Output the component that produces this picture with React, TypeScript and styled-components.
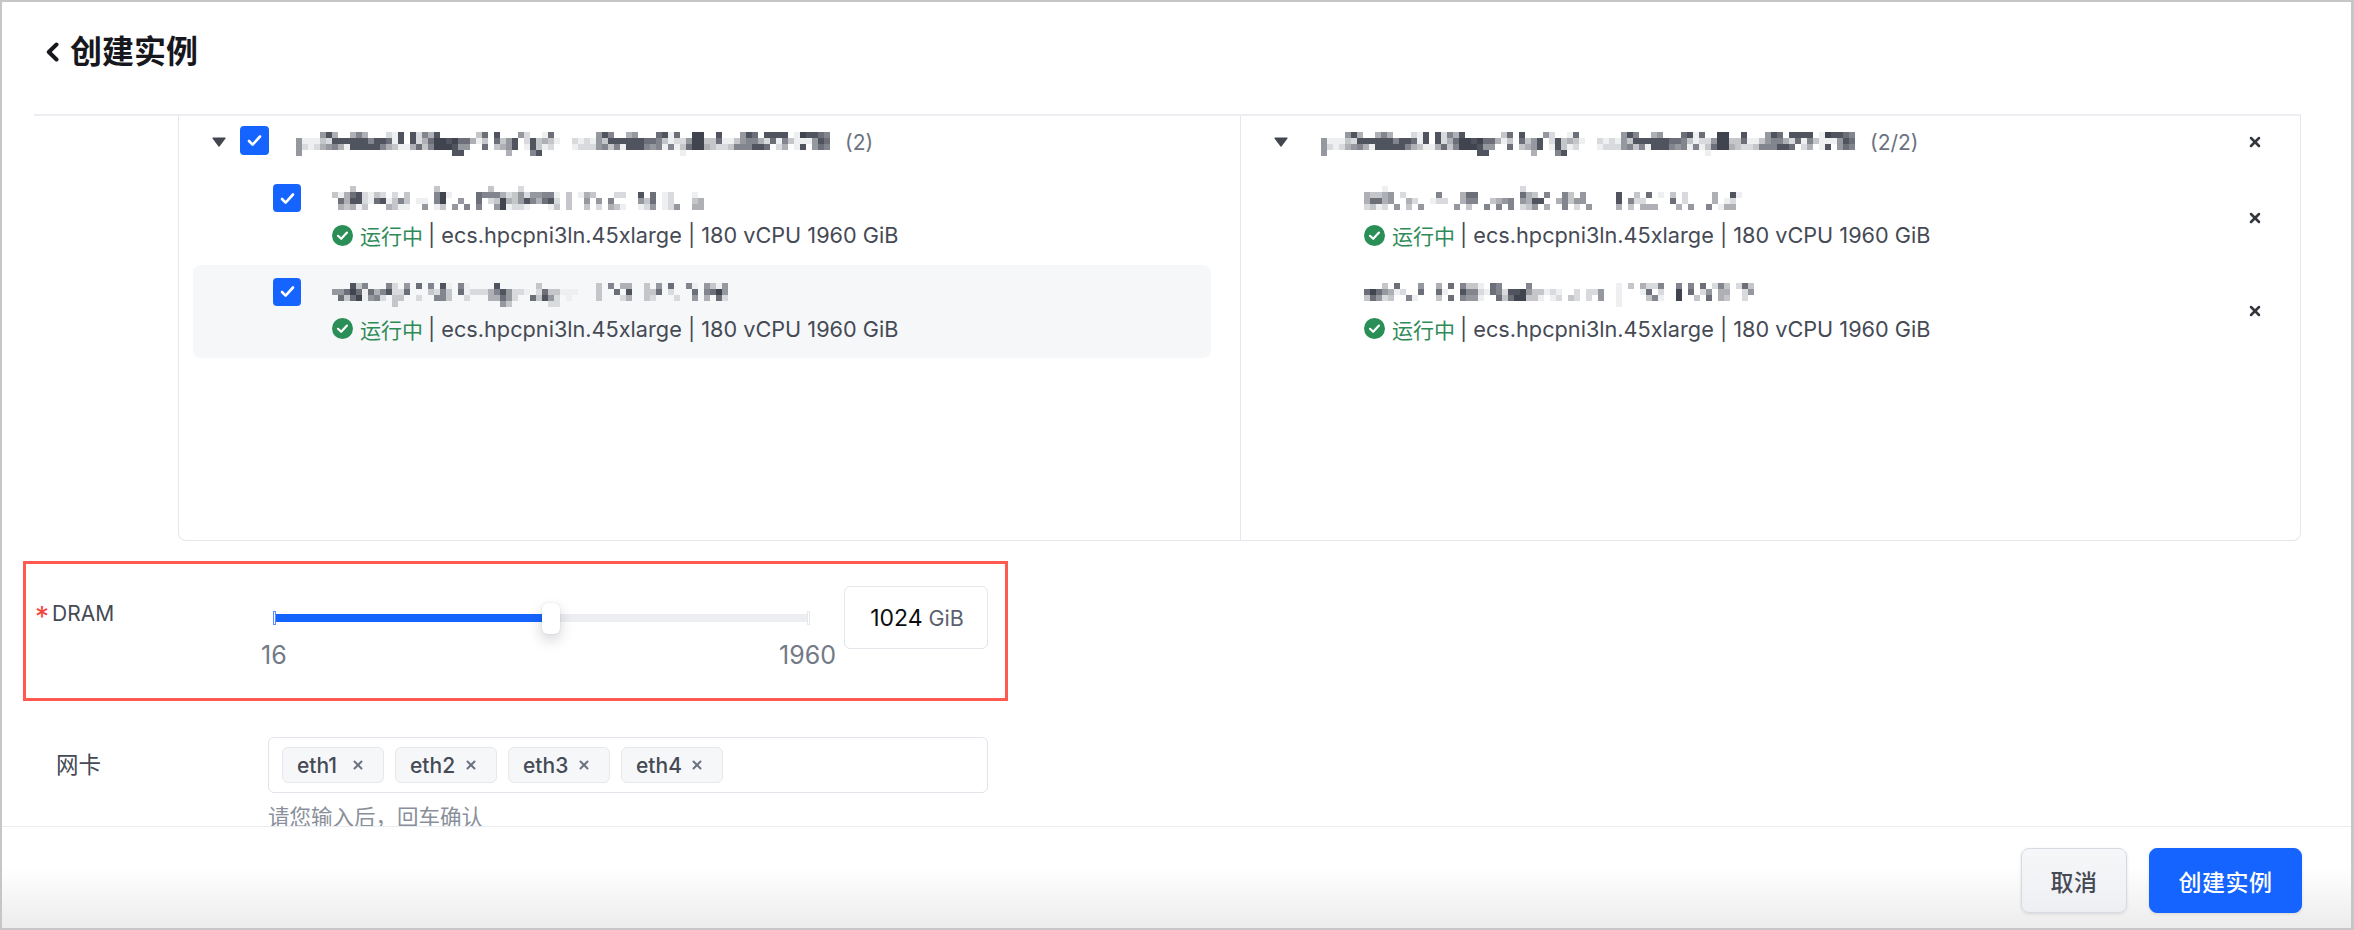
import React from "react";
import styled, { createGlobalStyle } from "styled-components";
import { X } from "lucide-react";

const LEVELS = ["", "#eeeff1", "#d8dadd", "#c4c6ca", "#aeb0b6", "#96989f", "#82858d", "#6c6f78", "#50545f", "#3f444f"];

// pixelated (redacted) names, one digit per 6px cell
const GROUP_NAME = [
  "0000584004 6400021808 2648000000 3708000520 017000 0000586004 5000781700 9900800058 7088880198 876",
  "5111328888 8868871808 2479989774 1307358028 343100 2121538888 8877631225 9933711356 6427163111 587",
  "5212456418 8888643114 7369998550 0703458018 312000 1222563618 8865616137 9943223666 8870240180 576",
  "5000000000 0000000000 0000008800 0000040006 800000 0000000000 0000000010",
];
const NODE_A = [
  "0003000000 0000000300 0000003000 0200000000",
  "3147821320 2030000691 0000766642 3525566103 0143000220 0807012000 10",
  "0748821781 3630110690 0500702394 3586478203 0050506000 0537012000 34",
  "0434130004 3110050130 5060600591 2210001303 0030204310 0125012500 44",
];
const NODE_B = [
  "0008360006 2050706081 0610000800 0000300000 0000306044 0030507006 105315",
  "5579717468 2270003263 0712224685 2210273311 1000300708 0033702000 706795",
  "0737915620 3300200663 0020004475 2007385201 0000300024 0032000200 504072",
  "0000000000 3000000000 0000000053 0000002200",
];
const NODE_C = [
  "0001000000 0000000000 0000002000",
  "4334502000 0060004770 0000007430 6006305000 0080030701 0302000040 081",
  "4774500420 0122004660 0345605488 0046355000 0080622000 0702000040 12",
  "2312050305 0000050300 6060602350 4006020500 0040304440 0040500601 44",
];
const NODE_D = [
  "0003070005 0040706331 0760000600 0000000000 0010304226 0060607026 30273",
  "7975412007 0071008662 1762889533 1210020225 0010001702 0090702504 40025",
  "3752300610 0030706551 0073799331 0120320205 0010000361 0090030704 3002",
  "0000000000 0000000000 0000000000 0000000000 001",
];

const GlobalStyle = createGlobalStyle`
  html, body {
    margin: 0;
    padding: 0;
    background: #fff;
  }
  body {
    font-family: Inter, "Noto Sans CJK SC", sans-serif;
    font-size: 21px;
    color: #454a55;
  }
`;

const Frame = styled.div`
  position: relative;
  box-sizing: border-box;
  width: 2354px;
  height: 930px;
  display: flex;
  flex-direction: column;
  overflow: hidden;
  background: #fff;
  border: solid #c6c6c6;
  border-width: 2px 3px 2px 2px;
`;

const Header = styled.header`
  flex: none;
  box-sizing: border-box;
  height: 112px;
  padding: 0 0 12px 44px;
  display: flex;
  align-items: center;
  gap: 11px;
`;

const Title = styled.h1`
  margin: 0;
  font-size: 32px;
  line-height: 40px;
  font-weight: 600;
  color: #16181d;
`;

const Body = styled.main`
  flex: 1;
  min-height: 0;
  overflow: hidden;
  margin: 0 50px 0 32px;
  border-top: 2px solid #eceef1;
`;

const Transfer = styled.section`
  box-sizing: border-box;
  margin-left: 144px;
  height: 425px;
  display: grid;
  grid-template-columns: 1062px 1fr;
  border: 1px solid #e4e6eb;
  border-top: none;
  border-radius: 0 0 8px 8px;
`;

const Panel = styled.div<{ $right?: boolean }>`
  padding-top: 10px;
  border-left: ${(p) => (p.$right ? "1px solid #e4e6eb" : "none")};
  margin-left: ${(p) => (p.$right ? "-1px" : "0")};
`;

const GroupRow = styled.div`
  height: 32px;
  padding-left: 33px;
  display: flex;
  align-items: center;
`;

const CaretIcon = styled.svg`
  flex: none;
  width: 14px;
  height: 10px;
`;

const GroupName = styled.div<{ $left: number }>`
  margin: 4px 0 0 ${(p) => p.$left}px;
`;

const Count = styled.span`
  margin-left: 15px;
  color: #6b7280;
`;

const ItemList = styled.div`
  margin-top: 13px;
`;

const Item = styled.div<{ $active?: boolean }>`
  box-sizing: border-box;
  width: 1018px;
  height: 93.5px;
  margin-left: 14px;
  padding-left: 80px;
  display: flex;
  gap: 31px;
  border-radius: 8px;
  background: ${(p) => (p.$active ? "#f6f7f9" : "transparent")};
`;

const SelectedItem = styled.div`
  height: 93.5px;
  padding: 0 37px 0 123px;
  display: flex;
  align-items: flex-start;
`;

const CheckBox = styled.span<{ $size: number; $top?: number; $left?: number }>`
  flex: none;
  align-self: flex-start;
  width: ${(p) => p.$size}px;
  height: ${(p) => p.$size}px;
  margin-top: ${(p) => p.$top ?? 0}px;
  margin-left: ${(p) => p.$left ?? 0}px;
  display: flex;
  align-items: center;
  justify-content: center;
  border-radius: 4px;
  background: #1664ff;
`;

const NodeText = styled.div`
  display: flex;
  flex-direction: column;
`;

const NameSlot = styled.div<{ $top: number }>`
  box-sizing: border-box;
  height: 49px;
  padding-top: ${(p) => p.$top}px;
`;

const Status = styled.div`
  display: flex;
  align-items: center;
  height: 30px;
  white-space: nowrap;
  font-size: 21.7px;
  color: #454a55;
`;

const StatusIcon = styled.svg`
  flex: none;
  width: 21px;
  height: 21px;
  margin-right: 7px;
`;

const Running = styled.span`
  color: #2e8b57;
  font-size: 21px;
  margin-right: 5px;
`;

const MosaicSvg = styled.svg`
  display: block;
  flex: none;
`;

const CloseButton = styled.span<{ $right?: number }>`
  flex: none;
  align-self: center;
  display: flex;
  color: #33363d;
  margin-left: auto;
  margin-right: ${(p) => p.$right ?? 0}px;
`;

const FormRow = styled.div<{ $top: number }>`
  display: flex;
  align-items: flex-start;
  margin-top: ${(p) => p.$top}px;
`;

const Label = styled.label<{ $top: number; $indent: number; $size: number }>`
  flex: none;
  box-sizing: border-box;
  width: 234px;
  padding-left: ${(p) => p.$indent}px;
  margin-top: ${(p) => p.$top}px;
  font-size: ${(p) => p.$size}px;
  line-height: 30px;
  white-space: nowrap;
  color: #454a55;
`;

const Star = styled.span`
  display: inline-block;
  width: 17px;
  font-size: 28px;
  line-height: 0;
  vertical-align: -6px;
  color: #f5443d;
`;

const SliderWrap = styled.div`
  flex: none;
  width: 576px;
  box-sizing: border-box;
  padding: 28px 35px 0 6px;
`;

const Track = styled.div`
  position: relative;
  height: 8px;
  background: #eceef2;
`;

const Fill = styled.div`
  height: 100%;
  background: #1664ff;
`;

const Tick = styled.span<{ $side: "left" | "right"; $on?: boolean }>`
  position: absolute;
  top: -3px;
  ${(p) => p.$side}: -1px;
  box-sizing: border-box;
  width: 3px;
  height: 14px;
  background: #fff;
  border: 1px solid ${(p) => (p.$on ? "#5c8dff" : "#e6e8ec")};
`;

const Thumb = styled.span`
  position: absolute;
  top: -11px;
  width: 18px;
  height: 31px;
  margin-left: -1px;
  border-radius: 6px;
  background: #fff;
  box-shadow: 0 6px 14px rgba(30, 35, 50, 0.2), 0 0 2px rgba(30, 35, 50, 0.12);
`;

const Marks = styled.div`
  display: flex;
  justify-content: space-between;
  margin: 18px -27px 0 -13px;
  font-size: 25px;
  line-height: 30px;
  color: #737a87;
`;

const ValueBox = styled.div`
  flex: none;
  box-sizing: border-box;
  width: 144px;
  height: 63px;
  padding-left: 2px;
  display: flex;
  align-items: center;
  justify-content: center;
  gap: 6px;
  border: 1px solid #e4e6eb;
  border-radius: 6px;
  font-size: 23px;
  color: #0c0d0e;
`;

const Unit = styled.span`
  color: #5a6170;
  font-size: 21.5px;
`;

const Field = styled.div`
  flex: none;
  width: 720px;
`;

const TagInput = styled.div`
  box-sizing: border-box;
  height: 56px;
  padding: 0 13px;
  display: flex;
  align-items: center;
  gap: 11px;
  border: 1px solid #e1e4ea;
  border-radius: 6px;
`;

const Tag = styled.span`
  box-sizing: border-box;
  width: 102px;
  height: 36px;
  padding: 0 18px 0 14px;
  display: flex;
  align-items: center;
  justify-content: space-between;
  border: 1px solid #e6e8ec;
  border-radius: 6px;
  background: #f6f7f9;
  font-weight: 500;
  font-size: 21px;
  color: #454a55;
`;

const TagClose = styled.span`
  display: flex;
  color: #6b7280;
`;

const Hint = styled.div`
  margin-top: 9px;
  font-size: 21.5px;
  line-height: 30px;
  color: #8a909b;
`;

const Footer = styled.footer`
  flex: none;
  box-sizing: border-box;
  height: 102px;
  padding: 21px 49px 0 0;
  display: flex;
  justify-content: flex-end;
  gap: 22px;
  border-top: 1px solid #eaecef;
  background: linear-gradient(#fff 40%, #ececec 100%);
`;

const Button = styled.button<{ $primary?: boolean }>`
  box-sizing: border-box;
  width: ${(p) => (p.$primary ? 153 : 106)}px;
  height: 65px;
  padding: 0;
  border-radius: 8px;
  border: 1px solid ${(p) => (p.$primary ? "#1664ff" : "#d5dae3")};
  background: ${(p) => (p.$primary ? "#1664ff" : "linear-gradient(#f6f7f9, #eeeff2)")};
  color: ${(p) => (p.$primary ? "#fff" : "#454a55")};
  box-shadow: 0 1px 3px rgba(30, 35, 50, 0.12);
  font: 500 23px Inter, "Noto Sans CJK SC", sans-serif;
  letter-spacing: 0.5px;
`;

const Highlight = styled.div`
  position: absolute;
  left: 21px;
  top: 559px;
  box-sizing: border-box;
  width: 985px;
  height: 140px;
  border: 3px solid #ff5a4f;
  pointer-events: none;
`;

function Mosaic({ rows }: { rows: string[] }) {
  const cells = rows.map((r) => r.replace(/ /g, ""));
  const cols = Math.max(...cells.map((r) => r.length));
  return (
    <MosaicSvg width={cols * 6} height={cells.length * 6} shapeRendering="crispEdges" aria-hidden="true">
      {cells.map((row, y) =>
        row.split("").map((c, x) =>
          c === "0" ? null : <rect key={`${x}-${y}`} x={x * 6} y={y * 6} width={6} height={6} fill={LEVELS[Number(c)]} />
        )
      )}
    </MosaicSvg>
  );
}

function Caret() {
  return (
    <CaretIcon viewBox="0 0 14 10" aria-hidden="true">
      <path d="M1 0.6h12a.6.6 0 0 1 .5 1L7.5 9.4a.6.6 0 0 1-1 0L.5 1.6a.6.6 0 0 1 .5-1z" fill="#42464e" />
    </CaretIcon>
  );
}

function Check() {
  return (
    <svg width="15" height="13" viewBox="0 0 15 13" aria-hidden="true">
      <path d="M2 7l3.6 3.6L13 2.5" fill="none" stroke="#fff" strokeWidth="2.6" strokeLinecap="round" strokeLinejoin="round" />
    </svg>
  );
}

function NodeStatus() {
  return (
    <Status>
      <StatusIcon viewBox="0 0 21 21" aria-hidden="true">
        <circle cx="10.5" cy="10.5" r="10.5" fill="#2a8f56" />
        <path d="M6 10.8l3.2 3L15 7.6" fill="none" stroke="#fff" strokeWidth="2.2" strokeLinecap="round" strokeLinejoin="round" />
      </StatusIcon>
      <Running>运行中</Running>| ecs.hpcpni3ln.45xlarge | 180 vCPU 1960 GiB
    </Status>
  );
}

function Remove({ right }: { right?: number }) {
  return (
    <CloseButton $right={right}>
      <X size={16} strokeWidth={3.8} />
    </CloseButton>
  );
}

export default function App() {
  // the handle sits at the middle of the track in the reference
  const percent = 50.2;

  return (
    <>
      <GlobalStyle />
      <Frame>
        <Header>
          <svg width="13" height="20" viewBox="0 0 13 20" aria-hidden="true">
            <path d="M10.5 2.5L2.8 10l7.7 7.5" fill="none" stroke="#16181d" strokeWidth="4" strokeLinecap="round" strokeLinejoin="round" />
          </svg>
          <Title>创建实例</Title>
        </Header>
        <Body>
          <Transfer>
            <Panel>
              <GroupRow>
                <Caret />
                <CheckBox $size={29} $left={14}>
                  <Check />
                </CheckBox>
                <GroupName $left={27}>
                  <Mosaic rows={GROUP_NAME} />
                </GroupName>
                <Count>(2)</Count>
              </GroupRow>
              <ItemList>
                <Item>
                  <CheckBox $size={28} $top={13}>
                    <Check />
                  </CheckBox>
                  <NodeText>
                    <NameSlot $top={15}>
                      <Mosaic rows={NODE_A} />
                    </NameSlot>
                    <NodeStatus />
                  </NodeText>
                </Item>
                <Item $active>
                  <CheckBox $size={28} $top={13}>
                    <Check />
                  </CheckBox>
                  <NodeText>
                    <NameSlot $top={18}>
                      <Mosaic rows={NODE_B} />
                    </NameSlot>
                    <NodeStatus />
                  </NodeText>
                </Item>
              </ItemList>
            </Panel>
            <Panel $right>
              <GroupRow>
                <Caret />
                <GroupName $left={33}>
                  <Mosaic rows={GROUP_NAME} />
                </GroupName>
                <Count>(2/2)</Count>
                <Remove right={37} />
              </GroupRow>
              <ItemList>
                <SelectedItem>
                  <NodeText>
                    <NameSlot $top={15}>
                      <Mosaic rows={NODE_C} />
                    </NameSlot>
                    <NodeStatus />
                  </NodeText>
                  <Remove />
                </SelectedItem>
                <SelectedItem>
                  <NodeText>
                    <NameSlot $top={18}>
                      <Mosaic rows={NODE_D} />
                    </NameSlot>
                    <NodeStatus />
                  </NodeText>
                  <Remove />
                </SelectedItem>
              </ItemList>
            </Panel>
          </Transfer>

          <FormRow $top={45}>
            <Label $top={13} $indent={1} $size={21}>
              <Star>*</Star>DRAM
            </Label>
            <SliderWrap>
              <Track>
                <Tick $side="left" $on />
                <Tick $side="right" />
                <Fill style={{ width: `${percent}%` }} />
                <Thumb style={{ left: `${percent}%` }} />
              </Track>
              <Marks>
                <span>16</span>
                <span>1960</span>
              </Marks>
            </SliderWrap>
            <ValueBox>
              1024 <Unit>GiB</Unit>
            </ValueBox>
          </FormRow>

          <FormRow $top={67}>
            <Label $top={13} $indent={22} $size={22.5}>
              网卡
            </Label>
            <Field>
              <TagInput>
                {["eth1", "eth2", "eth3", "eth4"].map((name) => (
                  <Tag key={name}>
                    {name}
                    <TagClose>
                      <X size={14} strokeWidth={3.4} />
                    </TagClose>
                  </Tag>
                ))}
              </TagInput>
              <Hint>请您输入后，回车确认</Hint>
            </Field>
          </FormRow>
        </Body>
        <Footer>
          <Button>取消</Button>
          <Button $primary>创建实例</Button>
        </Footer>
        <Highlight />
      </Frame>
    </>
  );
}
